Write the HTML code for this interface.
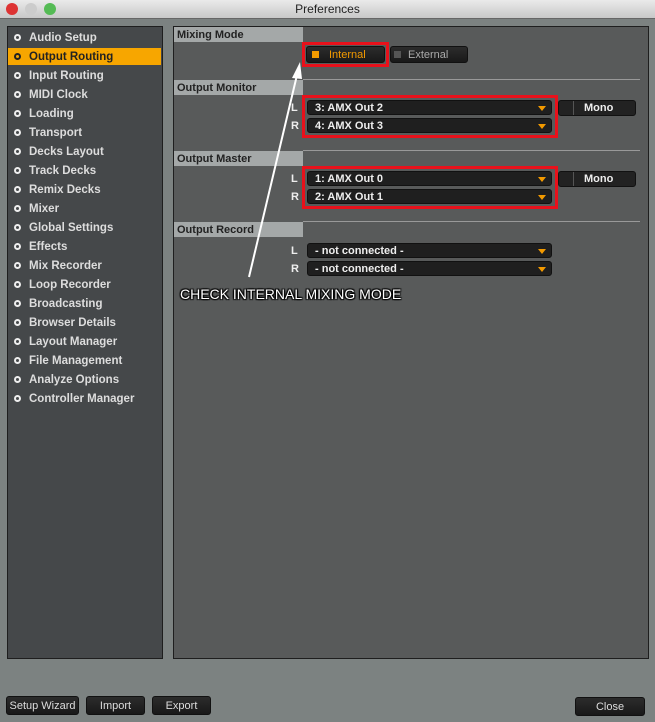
<!DOCTYPE html><html><head><style>
*{box-sizing:border-box;margin:0;padding:0}
body{width:655px;height:722px;background:#7c8281;font-family:"Liberation Sans",sans-serif;position:relative;overflow:hidden}
.a{position:absolute}
#tb{left:0;top:0;width:655px;height:19px;background:linear-gradient(#eaeaea,#c8c8c8);border-bottom:1px solid #666;text-align:center;font-size:12px;line-height:18px;color:#222}
.dot{top:3px;width:12px;height:12px;border-radius:50%}
#lp{left:7px;top:26px;width:156px;height:633px;background:#45484a;border:1px solid #1e1e1e}
#rp{left:173px;top:26px;width:476px;height:633px;background:#585a5a;border:1px solid #1e1e1e}
.it{position:absolute;left:1px;width:153px;height:17px;font-size:11.5px;color:#ddd;font-weight:600;line-height:18px;padding-left:21px}
.it:before{content:"";position:absolute;left:6px;top:5px;width:7px;height:7px;border-radius:50%;border:2px solid #eee;box-sizing:border-box}
.it.s{background:#f7a600;color:#222}
.it.s:before{border-color:#222}
.hd{position:absolute;left:174px;width:129px;height:15px;background:#a4a8a8;color:#222;font-size:11px;font-weight:600;line-height:16px;padding-left:3px}
.sep{position:absolute;left:303px;width:337px;height:1px;background:#999}
.dd{position:absolute;left:307px;width:245px;height:15px;background:#1f1f1f;border-radius:3px;color:#eee;font-size:11px;font-weight:bold;line-height:14px;padding-left:7px;border:1px solid #111}
.dd:after{content:"";position:absolute;right:5px;top:5px;border-left:4px solid transparent;border-right:4px solid transparent;border-top:5px solid #f39a00}
.lb{position:absolute;left:291px;color:#eee;font-size:11px;font-weight:bold}
.rb{position:absolute;border:3px solid #e8111b}
.mono{position:absolute;left:558px;width:78px;height:16px;background:#222;border-radius:3px;color:#eee;font-size:11px;font-weight:bold;line-height:15px;padding-left:25px;border:1px solid #111}
.mono:before{content:"";position:absolute;left:14px;top:0;width:1px;height:14px;background:#555}
.bt{position:absolute;height:19px;background:linear-gradient(#2c2c2c,#191919);border:1px solid #111;border-radius:3px;color:#ddd;font-size:11px;text-align:center;line-height:18px}
</style></head><body>
<div id="tb" class="a">Preferences</div>
<div class="a dot" style="left:6px;background:#d33"></div>
<div class="a dot" style="left:25px;background:#ccc"></div>
<div class="a dot" style="left:44px;background:#5b5"></div>
<div id="lp" class="a"></div>
<div id="rp" class="a"></div>
<div class="it" style="top:29px;left:8px">Audio Setup</div>
<div class="it s" style="top:48px;left:8px">Output Routing</div>
<div class="it" style="top:67px;left:8px">Input Routing</div>
<div class="it" style="top:86px;left:8px">MIDI Clock</div>
<div class="it" style="top:105px;left:8px">Loading</div>
<div class="it" style="top:124px;left:8px">Transport</div>
<div class="it" style="top:143px;left:8px">Decks Layout</div>
<div class="it" style="top:162px;left:8px">Track Decks</div>
<div class="it" style="top:181px;left:8px">Remix Decks</div>
<div class="it" style="top:200px;left:8px">Mixer</div>
<div class="it" style="top:219px;left:8px">Global Settings</div>
<div class="it" style="top:238px;left:8px">Effects</div>
<div class="it" style="top:257px;left:8px">Mix Recorder</div>
<div class="it" style="top:276px;left:8px">Loop Recorder</div>
<div class="it" style="top:295px;left:8px">Broadcasting</div>
<div class="it" style="top:314px;left:8px">Browser Details</div>
<div class="it" style="top:333px;left:8px">Layout Manager</div>
<div class="it" style="top:352px;left:8px">File Management</div>
<div class="it" style="top:371px;left:8px">Analyze Options</div>
<div class="it" style="top:390px;left:8px">Controller Manager</div>

<div class="hd" style="top:27px">Mixing Mode</div>
<div class="rb" style="left:302px;top:42px;width:87px;height:25px"></div>
<div class="bt" style="left:306px;top:46px;width:79px;height:17px;color:#f39a00;text-align:left;padding-left:22px;line-height:16px">Internal</div>
<div class="a" style="left:312px;top:51px;width:7px;height:7px;background:#f39a00"></div>
<div class="bt" style="left:390px;top:46px;width:78px;height:17px;color:#aaa;text-align:left;padding-left:17px;line-height:16px">External</div>
<div class="a" style="left:394px;top:51px;width:7px;height:7px;background:#555"></div>

<div class="sep" style="top:79px"></div>
<div class="hd" style="top:80px">Output Monitor</div>
<div class="rb" style="left:302px;top:95px;width:256px;height:43px"></div>
<div class="lb" style="top:102px">L</div><div class="dd" style="top:100px">3: AMX Out 2</div>
<div class="lb" style="top:120px">R</div><div class="dd" style="top:118px">4: AMX Out 3</div>
<div class="mono" style="top:100px">Mono</div>

<div class="sep" style="top:150px"></div>
<div class="hd" style="top:151px">Output Master</div>
<div class="rb" style="left:302px;top:166px;width:256px;height:43px"></div>
<div class="lb" style="top:173px">L</div><div class="dd" style="top:171px">1: AMX Out 0</div>
<div class="lb" style="top:191px">R</div><div class="dd" style="top:189px">2: AMX Out 1</div>
<div class="mono" style="top:171px">Mono</div>

<div class="sep" style="top:221px"></div>
<div class="hd" style="top:222px">Output Record</div>
<div class="lb" style="top:245px">L</div><div class="dd" style="top:243px">- not connected -</div>
<div class="lb" style="top:263px">R</div><div class="dd" style="top:261px">- not connected -</div>

<svg class="a" style="left:0;top:0" width="655" height="722"><line x1="249" y1="277" x2="297" y2="75" stroke="#fff" stroke-width="2"/><polygon points="300,62 292,78 302,79" fill="#fff"/></svg>
<div class="a" style="left:180px;top:286px;color:#fff;font-size:14px;text-shadow:1px 1px 1px #000,-1px -1px 1px #000,1px -1px 1px #000,-1px 1px 1px #000">CHECK INTERNAL MIXING MODE</div>

<div class="bt" style="left:6px;top:696px;width:73px">Setup Wizard</div>
<div class="bt" style="left:86px;top:696px;width:59px">Import</div>
<div class="bt" style="left:152px;top:696px;width:59px">Export</div>
<div class="bt" style="left:575px;top:697px;width:70px">Close</div>
</body></html>
